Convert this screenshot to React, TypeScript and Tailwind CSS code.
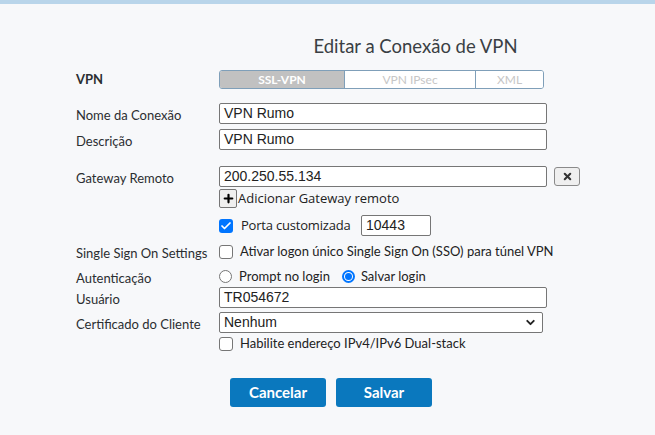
import { Check, ChevronDown, Plus, X } from "lucide-react";

const lato = "font-['Lato','Noto_Sans',sans-serif]";
const arial = "font-['Liberation_Sans',Arial,sans-serif]";
const segoe = "font-['Open_Sans','Noto_Sans',sans-serif]";

function Label({ children, bold }: { children: string; bold?: boolean }) {
  return (
    <div
      className={`w-[143px] shrink-0 text-[13px] text-[#2b2e31] ${lato} ${bold ? "font-bold" : "pt-[3px] leading-[16px]"}`}
    >
      {children}
    </div>
  );
}

function TextBox({ value, width = "w-[328px]" }: { value: string; width?: string }) {
  return (
    <div
      className={`${width} flex h-[21px] items-center rounded-[2px] border border-[#767676] bg-white pl-[4px] text-[14px] text-[#222] ${arial}`}
    >
      {value}
    </div>
  );
}

function CheckBox({ checked }: { checked?: boolean }) {
  return checked ? (
    <div className="flex h-[14px] w-[14px] shrink-0 items-center justify-center rounded-[3px] bg-[#0075ff]">
      <Check size={12} strokeWidth={3.5} className="text-white" />
    </div>
  ) : (
    <div className="h-[14px] w-[14px] shrink-0 rounded-[3px] border border-[#767676] bg-white" />
  );
}

function Radio({ checked }: { checked?: boolean }) {
  return checked ? (
    <div className="flex h-[13px] w-[13px] shrink-0 items-center justify-center rounded-full border-2 border-[#0075ff] bg-white">
      <div className="h-[7px] w-[7px] rounded-full bg-[#0075ff]" />
    </div>
  ) : (
    <div className="h-[13px] w-[13px] shrink-0 rounded-full border border-[#767676] bg-white" />
  );
}

export default function App() {
  return (
    <div className="h-[435px] w-[655px] overflow-hidden bg-[#f7f8fa]">
      <div className="h-[4px] bg-[#b9d5ea]" />

      <div className={`ml-[176px] mt-[31px] text-center text-[18.5px] leading-[22px] text-[#3a3f44] ${lato}`}>
        Editar a Conexão de VPN
      </div>

      <div className="ml-[76px] mt-[13px] flex flex-col">
        {/* VPN type */}
        <div className="flex h-[19px] items-center">
          <Label bold>VPN</Label>
          <div className={`flex h-[19px] w-[325px] overflow-hidden rounded-[3px] border-[1.5px] border-[#7f9fb9] text-[12px] ${lato}`}>
            <div className="flex w-[124px] items-center justify-center bg-[#c1c1c1] font-bold text-white">
              SSL-VPN
            </div>
            <div className="flex w-[131px] items-center justify-center border-l-[1.5px] border-[#7f9fb9] bg-white text-[#c6c6c6]">
              VPN IPsec
            </div>
            <div className="flex flex-1 items-center justify-center border-l-[1.5px] border-[#7f9fb9] bg-white text-[#c6c6c6]">
              XML
            </div>
          </div>
        </div>

        <div className="mt-[14px] flex h-[21px] items-center">
          <Label>Nome da Conexão</Label>
          <TextBox value="VPN Rumo" />
        </div>
        <div className="mt-[5px] flex h-[21px] items-center">
          <Label>Descrição</Label>
          <TextBox value="VPN Rumo" />
        </div>

        {/* Gateway */}
        <div className="mt-[16px] flex h-[21px] items-center">
          <Label>Gateway Remoto</Label>
          <TextBox value="200.250.55.134" />
          <div className="ml-[7px] flex h-[19px] w-[26px] items-center justify-center rounded-[3px] border border-[#8a8a8a] bg-[#efefef]">
            <X size={11} strokeWidth={4.5} className="text-[#333]" />
          </div>
        </div>
        <div className="mt-[2px] flex items-center pl-[143px]">
          <div className="flex h-[19px] w-[18px] items-center justify-center rounded-[2px] border border-[#767676] bg-[#efefef]">
            <Plus size={13} strokeWidth={4} className="text-black" />
          </div>
          <span className={`ml-[1px] text-[13px] text-[#222] ${segoe}`}>Adicionar Gateway remoto</span>
        </div>
        <div className="mt-[7px] flex h-[20px] items-center pl-[143px]">
          <CheckBox checked />
          <span className={`ml-[8px] w-[120px] text-[13px] tracking-[-0.2px] text-[#222] ${segoe}`}>Porta customizada</span>
          <div className="w-[70px]">
            <TextBox value="10443" width="w-[70px]" />
          </div>
        </div>

        {/* SSO */}
        <div className="mt-[8px] flex h-[16px] items-center">
          <Label>Single Sign On Settings</Label>
          <CheckBox />
          <span className={`ml-[7px] text-[13px] text-[#222] ${lato}`}>
            Ativar logon único Single Sign On (SSO) para túnel VPN
          </span>
        </div>
        <div className="mt-[9px] flex h-[16px] items-center">
          <Label>Autenticação</Label>
          <Radio />
          <span className={`ml-[7px] text-[13px] text-[#222] ${lato}`}>Prompt no login</span>
          <div className="ml-[12px]">
            <Radio checked />
          </div>
          <span className={`ml-[6px] text-[13px] text-[#222] ${lato}`}>Salvar login</span>
        </div>
        <div className="mt-[2px] flex h-[21px] items-center">
          <Label>Usuário</Label>
          <TextBox value="TR054672" />
        </div>
        <div className="mt-[4px] flex h-[21px] items-center">
          <Label>Certificado do Cliente</Label>
          <div
            className={`flex h-[21px] w-[324px] items-center justify-between rounded-[2px] border border-[#767676] bg-white pl-[4px] pr-[5px] text-[14px] text-[#222] ${arial}`}
          >
            <span>Nenhum</span>
            <ChevronDown size={13} strokeWidth={3.5} className="text-[#222]" />
          </div>
        </div>
        <div className="mt-[3px] flex h-[16px] items-center pl-[143px]">
          <CheckBox />
          <span className={`ml-[7px] text-[13px] text-[#222] ${lato}`}>
            Habilite endereço IPv4/IPv6 Dual-stack
          </span>
        </div>
      </div>

      <div className={`ml-[230px] mt-[26px] flex gap-[10px] text-[15px] font-bold text-white ${lato}`}>
        <button className="h-[29px] w-[96px] rounded-[3px] bg-[#0a78be]">Cancelar</button>
        <button className="h-[29px] w-[96px] rounded-[3px] bg-[#0a78be]">Salvar</button>
      </div>
    </div>
  );
}
